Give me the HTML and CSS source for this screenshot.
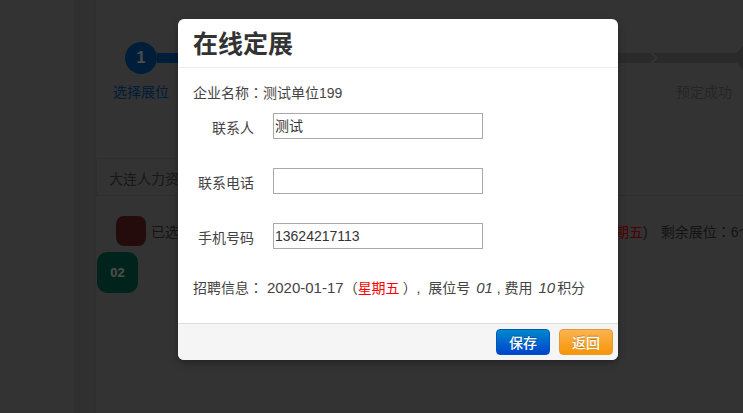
FILE: index.html
```html
<!DOCTYPE html>
<html lang="en">
<head>
  <meta charset="UTF-8">
  <meta name="viewport" content="width=device-width, initial-scale=1.0">
  <title>在线定展</title>
  <link rel="stylesheet" href="styles.css">
</head>
<body>
  <div class="page">
    <div class="gutter"></div>
    <div class="main">
      <div class="steps">
        <div class="step-one">
          <div class="step-track">
            <div class="step-num">1</div>
            <div class="step-bar"></div>
          </div>
          <div class="step-label">选择展位</div>
        </div>
        <div class="step-last">
          <div class="step-track">
            <svg width="125" height="32" viewBox="0 0 125 32">
              <path d="M0 11H32L37 16L32 21H0Z" fill="#8c8c8c"/>
              <path d="M35 11H119L125 4V28L119 21H35L40 16Z" fill="#8c8c8c"/>
            </svg>
          </div>
          <div class="step-label step-label-off">预定成功</div>
        </div>
      </div>
      <div class="tab-row">
        <div class="tab">大连人力资源市场</div>
      </div>
      <div class="legend">
        <span class="legend-box"></span>
        <span class="legend-text">已选展位</span>
        <span class="legend-date"><span class="red">星期五</span>)</span>
        <span class="legend-left">剩余展位<span class="colon">：</span>6个</span>
      </div>
      <div class="booth">02</div>
    </div>
  </div>

  <div class="overlay"></div>

  <div class="modal">
    <div class="modal-header">
      <h3>在线定展</h3>
    </div>
    <div class="modal-body">
      <p class="company">企业名称<span class="colon">：</span>测试单位199</p>
      <div class="field">
        <label for="contact">联系人</label>
        <input id="contact" class="input-cn" type="text" value="测试">
      </div>
      <div class="field">
        <label for="tel">联系电话</label>
        <input id="tel" type="text">
      </div>
      <div class="field">
        <label for="mobile">手机号码</label>
        <input id="mobile" type="text" value="13624217113">
      </div>
      <p class="info">招聘信息<span class="colon">：</span> <span class="num">2020-01-17</span>（<span class="red day">星期五</span>）, &nbsp;展位号 <em class="num">01</em> , 费用 <em class="num score">10</em>积分</p>
    </div>
    <div class="modal-footer">
      <button class="btn btn-save">保存</button>
      <button class="btn btn-back">返回</button>
    </div>
  </div>
</body>
</html>
```

FILE: styles.css
```css
html, body {
  margin: 0;
  padding: 0;
  height: 100%;
  overflow: hidden;
}

body {
  background: #ababab;
  color: #444;
  font-family: "Liberation Sans", "Noto Sans CJK SC", sans-serif;
  font-size: 14px;
  position: relative;
}

.page {
  display: flex;
  height: 413px;
  padding-left: 74px;
  box-sizing: border-box;
}

.gutter {
  width: 21px;
  background: #a0a0a0;
  border-right: 1px solid #9a9a9a;
}

.main {
  flex: 1;
  min-width: 0;
  overflow: hidden;
}

/* steps */
.steps {
  display: flex;
  justify-content: space-between;
  padding: 42px 0 0 17px;
  height: 158px;
  box-sizing: border-box;
}

.step-one {
  width: 100px;
}

.step-last {
  width: 125px;
}

.step-track {
  display: flex;
  align-items: center;
  height: 32px;
  margin-left: 12px;
}

.step-last .step-track {
  margin-left: 0;
}

.step-num {
  width: 32px;
  height: 32px;
  flex: none;
  border-radius: 50%;
  background: #0062c0;
  color: #fff;
  font-weight: bold;
  font-size: 16px;
  line-height: 32px;
  text-align: center;
}

.step-bar {
  width: 60px;
  height: 10px;
  flex: none;
  background: #0062c0;
}

.step-label {
  margin-top: 8px;
  line-height: 20px;
  color: #0062c0;
}

.step-label-off {
  color: #808080;
  padding-left: 58px;
}

/* booth panel */
.tab-row {
  height: 37px;
  border-bottom: 1px solid #9a9a9a;
}

.tab {
  width: 180px;
  height: 38px;
  box-sizing: border-box;
  padding: 10px 0 0 12px;
  line-height: 20px;
  color: #505050;
  border: 1px solid #9a9a9a;
  border-bottom: 0;
  border-radius: 4px 4px 0 0;
  white-space: nowrap;
  overflow: hidden;
}

.legend {
  display: flex;
  align-items: center;
  margin: 20px 0 0 20px;
  height: 30px;
  white-space: nowrap;
}

.legend-box {
  flex: none;
  width: 30px;
  height: 30px;
  border-radius: 8px;
  background: #7a2a2a;
}

.legend-text {
  flex: none;
  margin-left: 5px;
  width: 450px;
}

.legend-date {
  flex: none;
  margin-right: 13px;
}

.legend-left {
  flex: none;
}

.red {
  color: #f00;
}

.booth {
  width: 41px;
  height: 41px;
  margin: 6px 0 0 1px;
  border-radius: 10px;
  background: #007a5a;
  color: #fff;
  font-weight: bold;
  font-size: 13px;
  line-height: 41px;
  text-align: center;
}

/* dialog */
.overlay {
  position: absolute;
  top: 0;
  left: 0;
  width: 100%;
  height: 100%;
  background: rgba(0, 0, 0, 0.7);
}

.modal {
  position: absolute;
  top: 19px;
  left: 178px;
  width: 440px;
  height: 341px;
  display: flex;
  flex-direction: column;
  background: #fff;
  border-radius: 6px;
  box-shadow: 0 3px 7px rgba(0, 0, 0, 0.3);
  overflow: hidden;
}

.modal-header {
  height: 49px;
  box-sizing: border-box;
  padding: 7px 15px 0;
  border-bottom: 1px solid #eee;
}

.modal-header h3 {
  margin: 0;
  font-size: 25px;
  line-height: 36px;
  font-weight: bold;
  color: #333;
}

.modal-body {
  flex: 1;
  padding: 15px 15px 0;
}

.company {
  margin: 0;
  height: 20px;
  line-height: 20px;
}

.colon {
  font-family: "Noto Sans CJK TC", sans-serif;
  line-height: 1;
}

.field {
  display: flex;
  align-items: center;
  margin-bottom: 29px;
  height: 26px;
}

.company + .field {
  margin-top: 10px;
}

.field label {
  width: 61px;
  margin-top: 1px;
  text-align: right;
}

.field input {
  width: 210px;
  height: 26px;
  box-sizing: border-box;
  margin: 0 0 0 19px;
  padding: 1px;
  border: 1px solid #a9a9a9;
  font-family: inherit;
  font-size: 14px;
  color: #333;
  outline: 0;
}

.field .input-cn {
  padding-bottom: 4px;
}

.info {
  margin: 0;
  height: 20px;
  line-height: 20px;
  white-space: nowrap;
}

.num {
  font-size: 15px;
  line-height: 1;
}

em.num {
  margin-left: 2px;
}

.score {
  margin-right: 2px;
}

.day {
  margin-right: 3px;
}

.modal-footer {
  height: 36px;
  display: flex;
  justify-content: flex-end;
  align-items: center;
  gap: 9px;
  padding-right: 5px;
  background: #f5f5f5;
  border-top: 1px solid #ddd;
}

.btn {
  width: 54px;
  height: 26px;
  padding: 0;
  border-radius: 4px;
  font-family: inherit;
  font-size: 14px;
  font-weight: 500;
  color: #fff;
  text-shadow: 0 -1px 0 rgba(0, 0, 0, 0.25);
}

.btn-save {
  background: linear-gradient(to bottom, #0088cc, #0044cc);
  border: 1px solid #0055bb;
}

.btn-back {
  background: linear-gradient(to bottom, #fbb450, #f89406);
  border: 1px solid #e39a32;
}
```
